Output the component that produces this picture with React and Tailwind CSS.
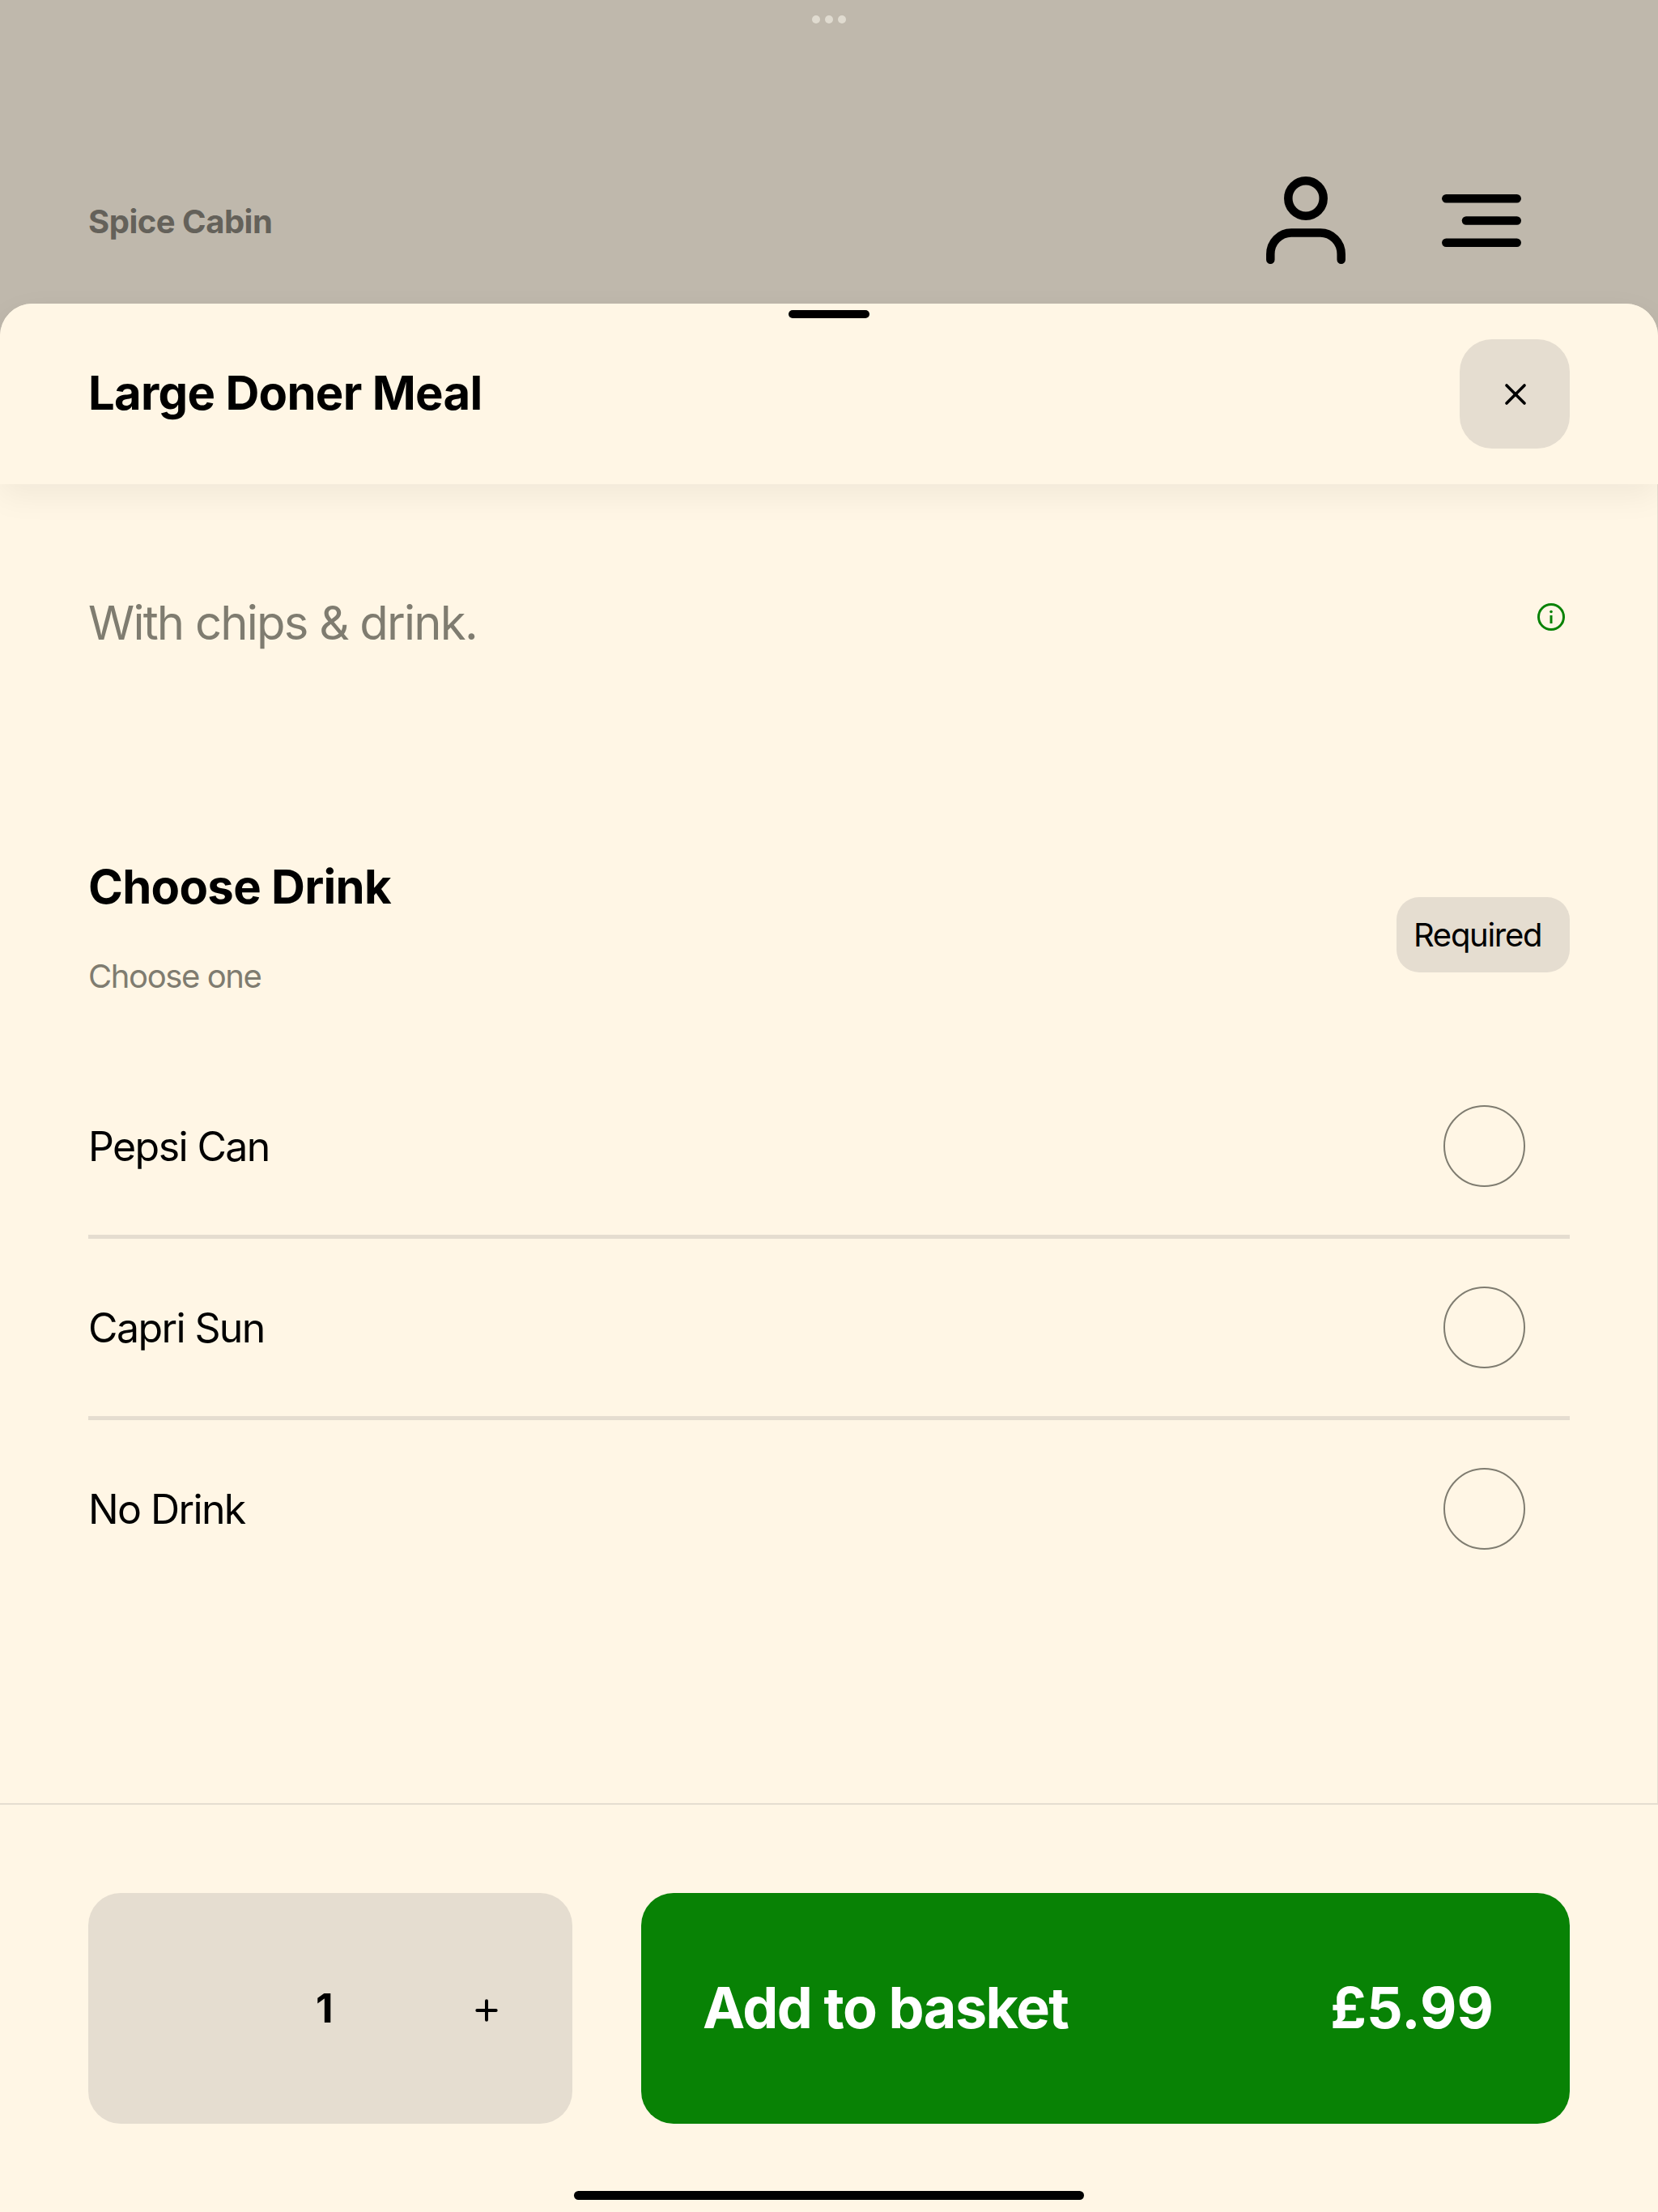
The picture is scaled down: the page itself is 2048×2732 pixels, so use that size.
import { Plus, X } from 'lucide-react';

const DRINKS = ['Pepsi Can', 'Capri Sun', 'No Drink'];

const PersonIcon = () => (
  <svg width="98" height="108" viewBox="0 0 98 108" fill="none" stroke="black" strokeWidth="10.5" strokeLinecap="round" className="block">
    <circle cx="49" cy="27" r="21.7" />
    <path d="M5.3 102.7V96C5.3 81 17 69.5 31 69.5H67C81 69.5 92.7 81 92.7 96V102.7" />
  </svg>
);

const MenuIcon = () => (
  <svg width="98" height="65" viewBox="0 0 98 65" fill="none" stroke="black" strokeWidth="10.5" strokeLinecap="round" className="block">
    <path d="M5.3 5.3H92.7" />
    <path d="M30 32.5H92.7" />
    <path d="M5.3 59.7H92.7" />
  </svg>
);

const InfoIcon = () => (
  <svg width="34" height="34" viewBox="0 0 34 34" fill="none" className="block">
    <circle cx="17" cy="17" r="15.5" stroke="#088205" strokeWidth="3" />
    <circle cx="17" cy="10.5" r="1.8" fill="#088205" />
    <path d="M17 15V25" stroke="#088205" strokeWidth="3" />
  </svg>
);

const DrinkRow = ({ name, last }) => (
  <div className={`flex items-center justify-between h-[224px] border-b-[5px] ${last ? 'border-transparent' : 'border-[#e5ddd0]'}`}>
    <span className="text-[50px] leading-[60px] tracking-[-1.6px] text-black">{name}</span>
    <span className="w-[101px] h-[101px] mr-[55px] rounded-full border-2 border-[#7f7c70]" />
  </div>
);

export default function App() {
  return (
    <div className="w-[2048px] h-[2732px] flex flex-col bg-[#bfb8ac] overflow-hidden font-['Inter',sans-serif]">
      {/* page behind the sheet */}
      <div className="h-[375px] shrink-0 flex flex-col">
        <div className="flex justify-center gap-[6px] pt-[19px]">
          <span className="w-[10px] h-[10px] rounded-full bg-[#e0dbd0]" />
          <span className="w-[10px] h-[10px] rounded-full bg-[#e0dbd0]" />
          <span className="w-[10px] h-[10px] rounded-full bg-[#e0dbd0]" />
        </div>
        <div className="flex items-start justify-between pl-[109px] pr-[169px] pt-[189px]">
          <span className="text-[40px] leading-[48px] mt-[32px] font-bold tracking-[-0.5px] text-[#64615a]">Spice Cabin</span>
          <div className="flex items-start gap-[119px]">
            <PersonIcon />
            <div className="mt-[22px]"><MenuIcon /></div>
          </div>
        </div>
      </div>

      {/* bottom sheet */}
      <div className="relative flex-1 flex flex-col bg-[#fff6e5] rounded-t-[40px]">
        <span className="absolute z-20 top-[8px] left-[974px] w-[100px] h-[10px] rounded-full bg-black" />

        <div className="relative z-10 h-[223px] shrink-0 flex items-center justify-between pl-[109px] pr-[109px] pt-[44px] pb-[44px] bg-[#fff6e5] rounded-t-[40px] shadow-[0_14px_40px_rgba(0,0,0,0.06)]">
          <h1 className="mb-[4px] text-[58px] leading-[68px] font-bold tracking-[-0.7px] text-black">Large Doner Meal</h1>
          <button className="w-[136px] h-[135px] rounded-[40px] bg-[#e5ddd0] flex items-center justify-center">
            <X className="ml-[2px]" size={44} strokeWidth={2} color="black" />
          </button>
        </div>

        <div className="flex-1 flex flex-col pl-[109px] pr-[108px] border-r border-[#e5ddd0]">
          <div className="flex items-start justify-between pt-[137px]">
            <p className="text-[58px] leading-[68px] tracking-[-1.77px] text-[#7f7c70]">With chips &amp; drink.</p>
            <div className="mt-[10px] mr-[6px]"><InfoIcon /></div>
          </div>

          <div className="flex items-start justify-between mt-[258px]">
            <div className="flex flex-col">
              <h2 className="text-[58px] leading-[68px] font-bold tracking-[-0.7px] text-black">Choose Drink</h2>
              <span className="mt-[53px] text-[40px] leading-[48px] tracking-[-1.4px] text-[#7f7c70]">Choose one</span>
            </div>
            <span className="mt-[47px] h-[93px] w-[214px] pl-[21px] flex items-center rounded-[28px] bg-[#e5ddd0] text-[40px] tracking-[-1.3px] text-black">Required</span>
          </div>

          <div className="flex flex-col mt-[76px]">
            {DRINKS.map((name, i) => (
              <DrinkRow key={name} name={name} last={i === DRINKS.length - 1} />
            ))}
          </div>
        </div>

        <div className="h-[505px] shrink-0 border-t-2 border-[#e5ddd0] flex flex-col">
          <div className="flex gap-[85px] pl-[109px] pr-[109px] pt-[109px]">
            <div className="w-[598px] h-[285px] rounded-[40px] bg-[#e5ddd0] flex items-center text-black">
              <span className="ml-[281px] mb-[2px] w-[26px] text-[50px] leading-[60px] font-bold">1</span>
              <Plus className="ml-[165px] mt-[4px]" size={40} strokeWidth={2.4} />
            </div>
            <button className="flex-1 h-[285px] rounded-[40px] bg-[#088205] flex items-center justify-between pl-[76px] pr-[94px] text-white text-[70px] leading-[84px] font-bold">
              <span className="tracking-[-1.5px] mb-[1px]">Add to basket</span>
              <span className="tracking-[0.1px] mb-[1px]">£5.99</span>
            </button>
          </div>
          <span className="self-center mt-[83px] w-[630px] h-[11px] rounded-full bg-black" />
        </div>
      </div>
    </div>
  );
}
